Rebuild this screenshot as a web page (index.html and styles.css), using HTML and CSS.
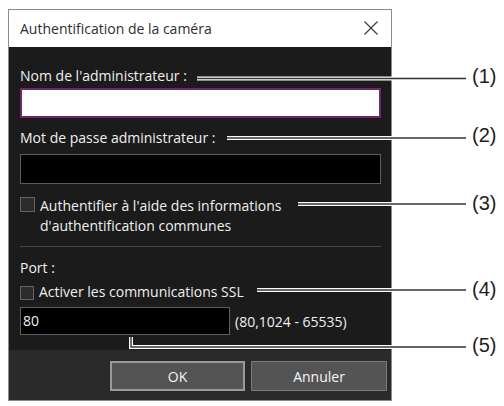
FILE: index.html
```html
<!DOCTYPE html>
<html lang="fr">
<head>
<meta charset="utf-8">
<title>Authentification de la caméra</title>
<link rel="stylesheet" href="styles.css">
</head>
<body>
<div class="page">
  <div class="dialog">
    <div class="titlebar">
      <span class="title">Authentification de la caméra</span>
      <span class="close" aria-label="Fermer">
        <svg width="16" height="16" viewBox="0 0 16 16"><path d="M1.5 1.5 L14.5 14.5 M14.5 1.5 L1.5 14.5" stroke="#3a3a3a" stroke-width="1.2" fill="none"/></svg>
      </span>
    </div>
    <div class="content">
      <div class="label first">Nom de l'administrateur :</div>
      <div class="field focused"></div>
      <div class="label second">Mot de passe administrateur :</div>
      <div class="field pwd"></div>
      <div class="check-row common">
        <span class="box"></span>
        <span class="check-text">Authentifier à l'aide des informations<br>d'authentification communes</span>
      </div>
      <div class="sep"></div>
      <div class="label port-label">Port :</div>
      <div class="check-row ssl">
        <span class="box"></span>
        <span class="check-text">Activer les communications SSL</span>
      </div>
      <div class="port-row">
        <div class="field port">80</div>
        <span class="range">(80,1024 - 65535)</span>
      </div>
    </div>
    <div class="footer">
      <button class="btn ok">OK</button>
      <button class="btn">Annuler</button>
    </div>
  </div>
  <svg class="callouts" width="504" height="406" viewBox="0 0 504 406">
    <g class="halo" fill="none" stroke="#ffffff" stroke-width="4">
      <path d="M197 78.5 H466"/>
      <path d="M227 138 H466"/>
      <path d="M298 204 H466"/>
      <path d="M257 290 H466"/>
      <path d="M131 337 V347 H466"/>
    </g>
    <g class="core" fill="none" stroke="#333333" stroke-width="1.4">
      <path d="M197 78.5 H466"/>
      <path d="M227 138 H466"/>
      <path d="M298 204 H466"/>
      <path d="M257 290 H466"/>
      <path d="M131 337 V347 H466"/>
    </g>
    <g class="nums">
      <text x="472" y="83">(1)</text>
      <text x="472" y="142">(2)</text>
      <text x="472" y="209.5">(3)</text>
      <text x="472" y="295.5">(4)</text>
      <text x="472" y="352">(5)</text>
    </g>
  </svg>
</div>
</body>
</html>
```
FILE: styles.css
```css
* { box-sizing: border-box; }
html, body { margin: 0; padding: 0; background: #ffffff; }
body { width: 504px; height: 406px; overflow: hidden; }

.page {
  position: relative;
  width: 504px;
  height: 406px;
  padding: 9px 0 0 8px;
  font-family: "Open Sans", "Noto Sans", sans-serif;
}

.dialog {
  width: 384px;
  border: 1px solid #8c8c8c;
  display: flex;
  flex-direction: column;
}

.titlebar {
  height: 37px;
  background: #ffffff;
  display: flex;
  align-items: center;
  justify-content: space-between;
  padding: 0 12px 0 11px;
}
.title {
  font-size: 14px;
  color: #2e2e2e;
  line-height: 18px;
}
.close { display: flex; width: 16px; height: 16px; margin-top: -1px; }

.content {
  background: #1b1b1b;
  display: flex;
  flex-direction: column;
  padding: 20px 10px 15px 11px;
  color: #f0f0f0;
  font-size: 14px;
}

.label { line-height: 18px; height: 18px; }
.label.second { margin-top: 11px; }
.label.port-label { margin-top: 12px; }

.field {
  height: 30px;
  border: 1px solid #5e5e5e;
  background: #000000;
}
.field.focused {
  margin-top: 3px;
  background: #ffffff;
  border: 2px solid #6a2a68;
  box-shadow: 0 0 0 1px #2e0c2c;
}
.field.pwd { margin-top: 7px; }

.check-row {
  display: flex;
  align-items: flex-start;
  gap: 5px;
  line-height: 20px;
}
.check-row.common { margin-top: 12px; }
.check-row.ssl { margin-top: 5px; }
.box {
  width: 15px;
  height: 15px;
  flex: none;
  border: 1px solid #646464;
  background: #2c2c2c;
  margin-top: 1px;
}
.check-row.ssl .box { width: 14px; height: 14px; margin-top: 4px; }

.sep {
  height: 1px;
  background: #464646;
  margin-top: 10px;
}

.port-row {
  display: flex;
  align-items: center;
  gap: 5px;
  margin-top: 5px;
}
.field.port {
  width: 210px;
  height: 28px;
  line-height: 26px;
  padding-left: 2px;
  color: #f0f0f0;
}
.range { color: #f0f0f0; }

.footer {
  background: #2a2a2a;
  height: 50px;
  display: flex;
  justify-content: flex-end;
  align-items: flex-start;
  gap: 6px;
  padding: 11px 4px 0 0;
}
.btn {
  font-family: "Open Sans", "Noto Sans", sans-serif;
  font-size: 14px;
  color: #f4f4f4;
  height: 30px;
  width: 136px;
  background: #545454;
  border: 1px solid #7a7a7a;
  padding: 0;
}
.btn.ok {
  width: 135px;
  border: 2px solid #9a9a9a;
}

.callouts {
  position: absolute;
  left: 0;
  top: 0;
  pointer-events: none;
}
.nums text {
  font-family: "Liberation Sans", Arial, sans-serif;
  font-size: 20px;
  fill: #1e1e1e;
}
```
